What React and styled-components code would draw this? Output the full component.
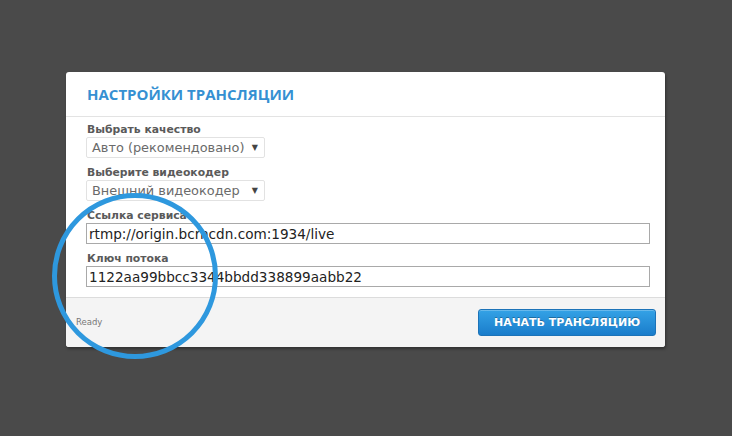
import React from 'react'
import styled, { createGlobalStyle } from 'styled-components'

const GlobalStyle = createGlobalStyle`
  html, body {
    margin: 0;
    padding: 0;
    background: #4a4a4a;
  }
  body {
    font-family: 'DejaVu Sans', Verdana, sans-serif;
  }
`

const Screen = styled.div`
  position: relative;
  width: 732px;
  height: 436px;
  padding: 72px 0 0 66px;
  box-sizing: border-box;
`

const Panel = styled.div`
  width: 599px;
  background: #fff;
  border-radius: 3px;
  box-shadow: 1px 2px 3px rgba(0, 0, 0, 0.35);
  overflow: hidden;
`

const Header = styled.header`
  height: 45px;
  display: flex;
  align-items: center;
  padding: 0 21px;
  border-bottom: 1px solid #e3e3e3;
  box-sizing: border-box;
`

const Title = styled.h2`
  margin: 0;
  font-family: 'Open Sans', sans-serif;
  font-weight: 700;
  font-size: 15px;
  color: #3590d2;
`

const Body = styled.div`
  padding: 5px 15px 10px 20px;
  display: flex;
  flex-direction: column;
`

const Field = styled.div`
  display: flex;
  flex-direction: column;
  align-items: flex-start;
  & + & {
    margin-top: 7px;
  }
`

const Label = styled.label`
  font-size: 10.8px;
  font-weight: 700;
  color: #5a5a5a;
  line-height: 15px;
  padding-left: 1px;
`

const Select = styled.div`
  width: 179px;
  height: 21px;
  box-sizing: border-box;
  border: 1px solid #e2e2e2;
  border-radius: 2px;
  display: flex;
  align-items: center;
  justify-content: space-between;
  padding: 0 6px 0 5px;
  font-size: 12.9px;
  color: #6a6a6a;
`

const Caret = styled.span`
  font-size: 8px;
  color: #444;
`

const Input = styled.input`
  width: 564px;
  height: 21px;
  box-sizing: border-box;
  border: 1px solid #a9a9a9;
  padding: 0 2px;
  font-family: 'DejaVu Sans', Verdana, sans-serif;
  font-size: 13.6px;
  color: #222;
  background: #fff;
  outline: none;
`

const Footer = styled.footer`
  height: 50px;
  background: #f4f4f4;
  border-top: 1px solid #dcdcdc;
  box-sizing: border-box;
  display: flex;
  justify-content: space-between;
  align-items: flex-start;
  padding: 11px 9px 0 10px;
`

const Status = styled.span`
  font-size: 8.5px;
  color: #777;
  margin-top: 8px;
`

const StartButton = styled.button`
  width: 178px;
  height: 27px;
  border: 1px solid #1c73b8;
  border-radius: 3px;
  background: linear-gradient(#34a2e6, #1a7dcb);
  color: #fff;
  font-family: 'DejaVu Sans', Verdana, sans-serif;
  font-weight: 700;
  font-size: 11px;
  text-shadow: 0 -1px 0 rgba(0, 0, 0, 0.3);
  box-shadow: inset 0 1px 0 rgba(255, 255, 255, 0.25);
  cursor: pointer;
`

const Marker = styled.div`
  position: absolute;
  left: 52px;
  top: 193px;
  width: 166px;
  height: 166px;
  box-sizing: border-box;
  border: 5px solid #2e98de;
  border-radius: 50%;
  pointer-events: none;
`

const App = () => (
  <>
    <GlobalStyle />
    <Screen>
      <Panel>
        <Header>
          <Title>НАСТРОЙКИ ТРАНСЛЯЦИИ</Title>
        </Header>
        <Body>
          <Field>
            <Label>Выбрать качество</Label>
            <Select>
              Авто (рекомендовано)
              <Caret>▼</Caret>
            </Select>
          </Field>
          <Field>
            <Label>Выберите видеокодер</Label>
            <Select>
              Внешний видеокодер
              <Caret>▼</Caret>
            </Select>
          </Field>
          <Field>
            <Label>Ссылка сервиса</Label>
            <Input readOnly value="rtmp://origin.bcrncdn.com:1934/live" />
          </Field>
          <Field>
            <Label>Ключ потока</Label>
            <Input readOnly value="1122aa99bbcc3344bbdd338899aabb22" />
          </Field>
        </Body>
        <Footer>
          <Status>Ready</Status>
          <StartButton>НАЧАТЬ ТРАНСЛЯЦИЮ</StartButton>
        </Footer>
      </Panel>
      <Marker />
    </Screen>
  </>
)

export default App
